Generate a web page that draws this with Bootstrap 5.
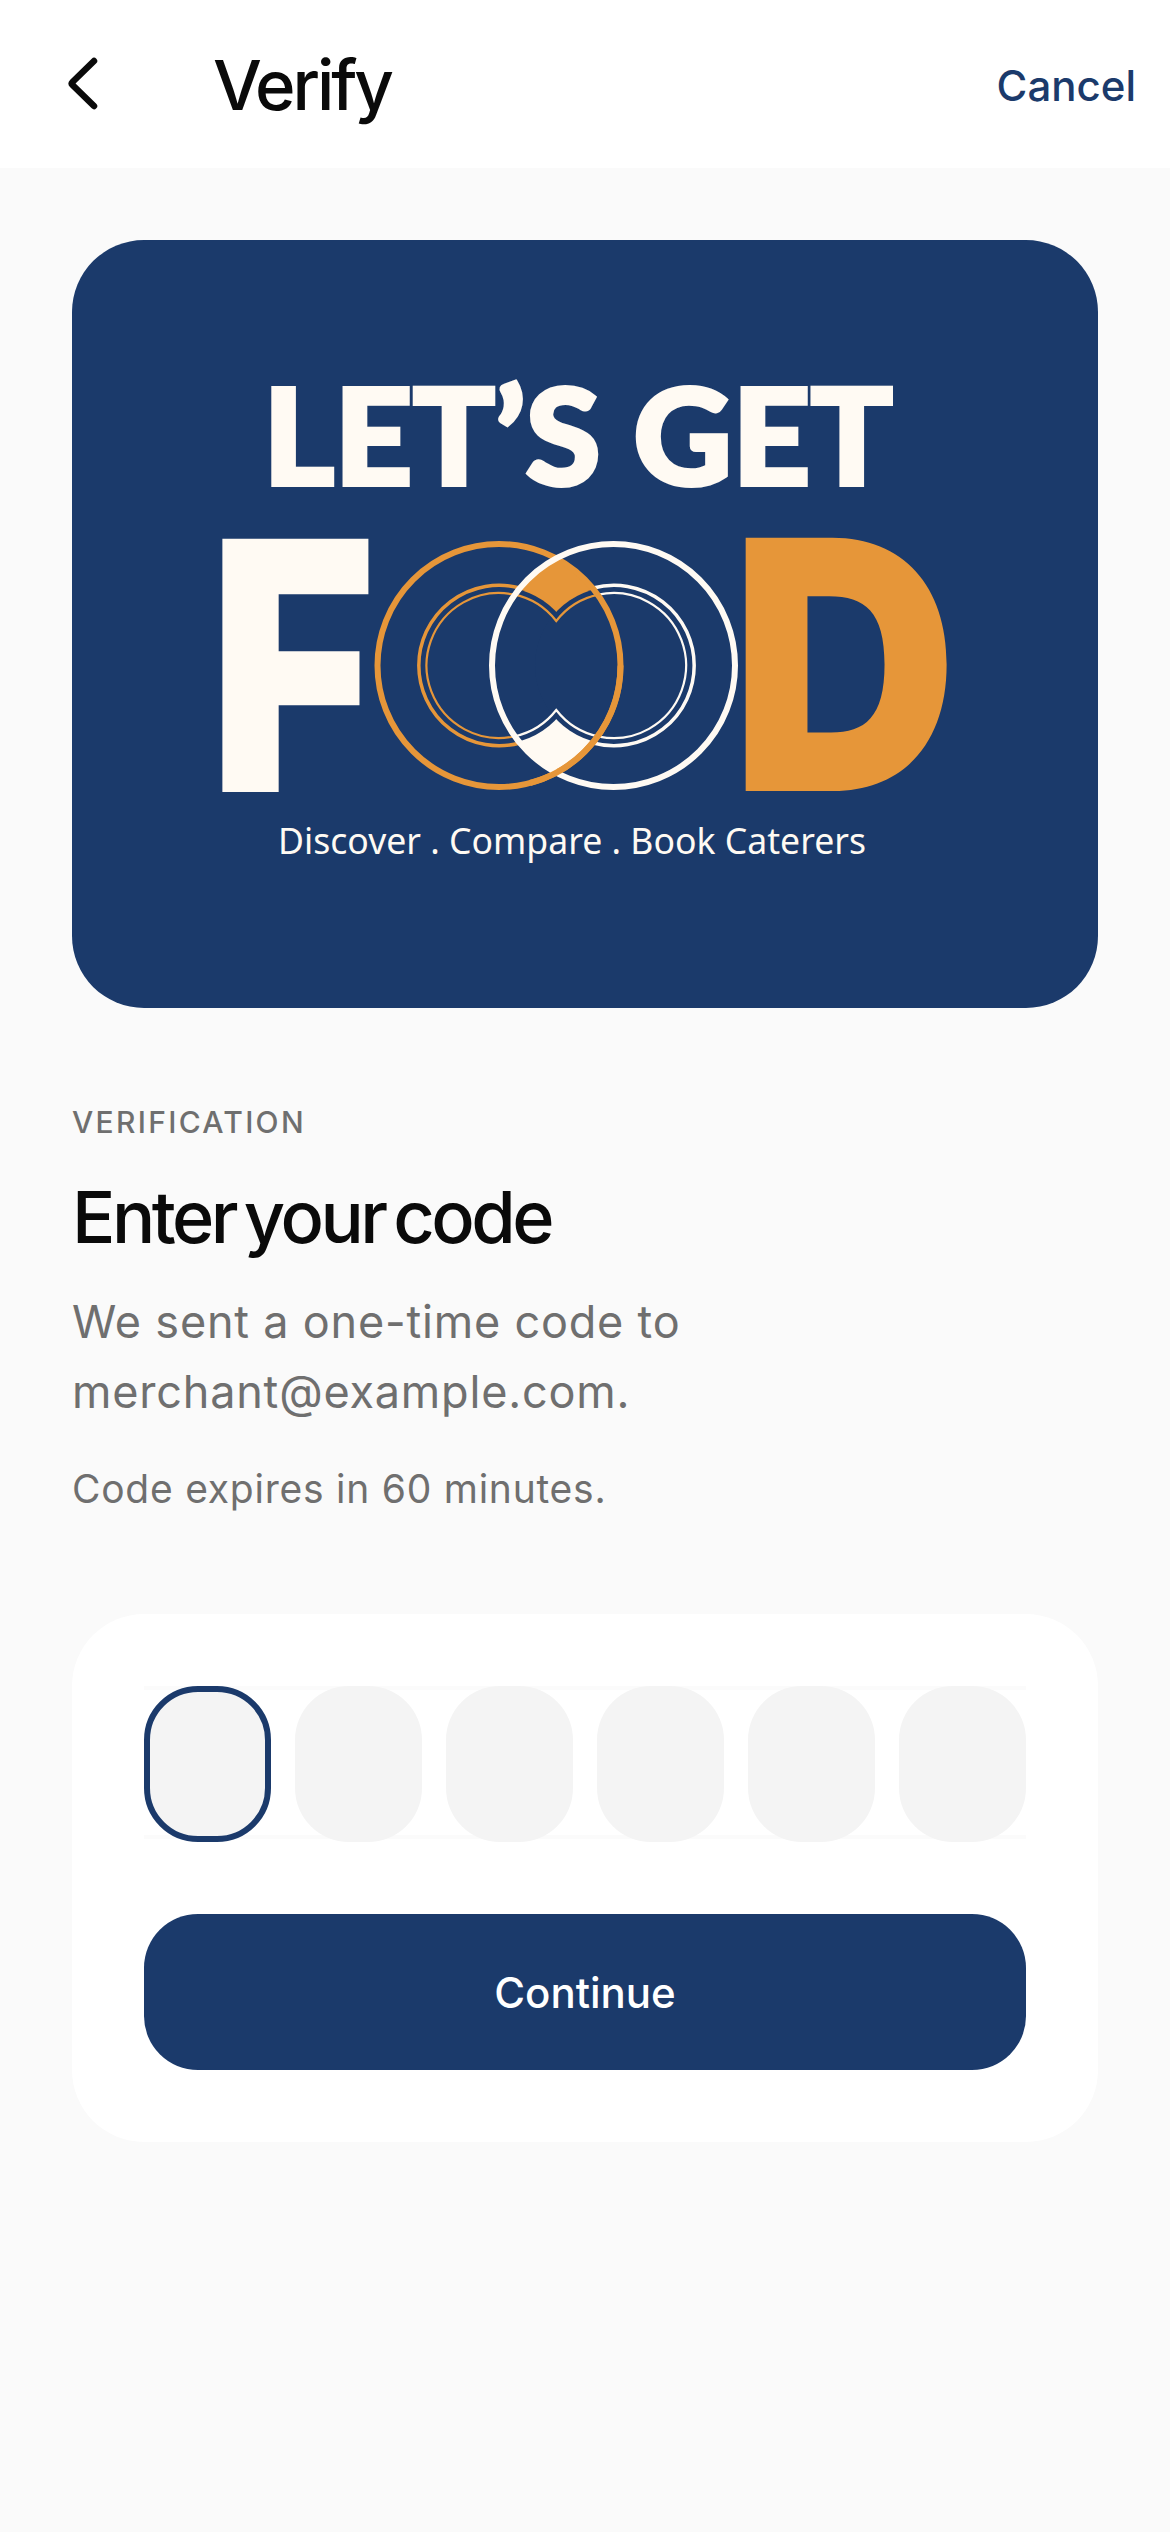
<!DOCTYPE html>
<html lang="en">
<head>
<meta charset="utf-8">
<title>Verify</title>
<link rel="stylesheet" href="https://cdn.jsdelivr.net/npm/bootstrap@5.3.0/dist/css/bootstrap.min.css">
<style>
html,body{margin:0;background:#fafafa;font-family:Inter,"Liberation Sans",sans-serif;}
.page-shell{width:1170px;min-height:2532px;background:#fafafa;}
.top-head{height:168px;background:#fff;padding:0 34px 0 60px;}
.back-ico{width:48px;height:60px;display:block;margin-right:105px;}
.head-title{font-size:69px;font-weight:500;letter-spacing:-3.1px;color:#0a0a0a;margin:3px 0 0;line-height:1;}
.cancel-link{font-size:42px;font-weight:500;color:#1b3a6b;text-decoration:none;line-height:1;margin-top:4px;}
.content-wrap{padding:72px 72px 0;}
.hero-card{height:768px;background:#1b3a6b;border-radius:72px;overflow:hidden;}
.hero-card svg{display:block;width:1026px;height:768px;}
.eyebrow{font-size:30px;font-weight:500;letter-spacing:2.3px;color:#6f6f6f;line-height:36px;margin:96px 0 0;}
.main-title{font-size:72px;font-weight:500;letter-spacing:-3.5px;word-spacing:-7px;color:#0a0a0a;line-height:80px;margin:37px 0 0;}
.lead-copy{font-size:45px;font-weight:400;letter-spacing:.8px;color:#6f6f6f;line-height:69.5px;margin:30px 0 0;max-width:800px;}
.note-copy{font-size:39px;font-weight:400;letter-spacing:.75px;color:#6f6f6f;line-height:48px;margin:39px 0 0;}
.code-panel{background:#fff;border-radius:72px;padding:72px;margin-top:101px;}
.otp-row{gap:24px;position:relative;}
.otp-rule{position:absolute;left:0;right:0;top:0;height:153px;border-top:4px solid #fbfbfb;border-bottom:4px solid #fbfbfb;}
.otp-cell{position:relative;flex:1 1 0;min-width:0;height:156px;border:6px solid transparent;border-radius:54px;background:#f4f4f4;padding:0;box-shadow:none;}
.otp-cell:focus{background:#f4f4f4;box-shadow:none;}
.otp-on{border-color:#1b3a6b;}
.go-btn{height:156px;margin-top:72px;background:#1b3a6b;border:0;border-radius:54px;color:#fff;font-size:42px;font-weight:500;}
.go-btn:hover{background:#1b3a6b;color:#fff;}
.logo-line{font-family:Lato,"Liberation Sans",sans-serif;font-weight:900;stroke-width:4;stroke-linejoin:miter;}
.logo-big{font-family:Inter,"Liberation Sans",sans-serif;font-weight:900;}
.logo-tag{font-family:"Noto Sans","Open Sans",sans-serif;font-weight:400;}
</style>
</head>
<body>
<div class="page-shell d-flex flex-column">
  <header class="top-head d-flex align-items-center justify-content-between">
    <div class="d-flex align-items-center">
      <svg class="back-ico" viewBox="0 0 48 60" aria-label="Back"><path d="M34 7 L12.500 28 Q11 29.500 12.500 31 L34 52" fill="none" stroke="#0a0a0a" stroke-width="6.500" stroke-linecap="round" stroke-linejoin="round"/></svg>
      <h1 class="head-title">Verify</h1>
    </div>
    <a href="#" class="cancel-link">Cancel</a>
  </header>
  <main class="content-wrap">
    <div class="hero-card">
      <svg viewBox="72 240 1026 768" xmlns="http://www.w3.org/2000/svg" role="img" aria-label="Let's get food logo">
        <text class="logo-line" x="263" y="485" font-size="134" fill="#fffaf3" stroke="#fffaf3" textLength="630" lengthAdjust="spacingAndGlyphs">LET’S GET</text>
        <text class="logo-big" transform="translate(209 792) scale(.82 1)" font-size="348" fill="#fffaf3">F</text>
        <text class="logo-big" transform="translate(731 791) scale(.9 1)" font-size="348" fill="#e69639">D</text>
        <path d="M556.25 558.3A121.5 121.500 0 0 1 620.500 665.500L491.700 665.500A121.500 121.500 0 0 1 556.250 558.300Z" fill="#e69639"/>
        <path d="M556.25 772.7A121.5 121.500 0 0 0 620.500 665.500L491.700 665.500A121.500 121.500 0 0 0 556.250 772.700Z" fill="#fffaf3"/>
        <circle cx="499" cy="665.5" r="78.5" fill="#1b3a6b"/>
        <circle cx="613.5" cy="665.5" r="78.5" fill="#1b3a6b"/>
        <g fill="none">
          <path d="M519.9 588A80.25 80.25 0 1 0 519.9 743" stroke="#e69639" stroke-width="3.5"/>
          <path d="M593.1 588A80.25 80.25 0 1 1 593.1 743" stroke="#fffaf3" stroke-width="3.5"/>
          <path d="M514.7 736.3A72.5 72.5 0 1 1 556.25 621A72.5 72.5 0 0 1 598.3 594.7" stroke="#e69639" stroke-width="2.2"/>
          <path d="M598.3 594.7A72.5 72.5 0 1 1 556.25 710A72.5 72.5 0 0 1 514.7 736.3" stroke="#fffaf3" stroke-width="2.2"/>
          <circle cx="499" cy="665.5" r="121.5" stroke="#e69639" stroke-width="6"/>
          <circle cx="613.5" cy="665.5" r="121.5" stroke="#fffaf3" stroke-width="6"/>
          <path d="M620.5 665.5A121.5 121.5 0 0 1 530 783" stroke="#e69639" stroke-width="6"/>
        </g>
        <text class="logo-tag" x="278" y="854" font-size="36" fill="#fffaf3" textLength="588" lengthAdjust="spacingAndGlyphs">Discover . Compare . Book Caterers</text>
      </svg>
    </div>
    <p class="eyebrow">VERIFICATION</p>
    <h2 class="main-title">Enter your code</h2>
    <p class="lead-copy">We sent a one-time code to merchant@example.com.</p>
    <p class="note-copy">Code expires in 60 minutes.</p>
    <section class="code-panel">
      <div class="otp-row d-flex">
        <div class="otp-rule"></div>
        <input class="otp-cell form-control otp-on" aria-label="Digit 1">
        <input class="otp-cell form-control" aria-label="Digit 2">
        <input class="otp-cell form-control" aria-label="Digit 3">
        <input class="otp-cell form-control" aria-label="Digit 4">
        <input class="otp-cell form-control" aria-label="Digit 5">
        <input class="otp-cell form-control" aria-label="Digit 6">
      </div>
      <button type="button" class="btn go-btn w-100 d-block">Continue</button>
    </section>
  </main>
</div>
<script src="https://cdn.jsdelivr.net/npm/bootstrap@5.3.0/dist/js/bootstrap.bundle.min.js"></script>
</body>
</html>
